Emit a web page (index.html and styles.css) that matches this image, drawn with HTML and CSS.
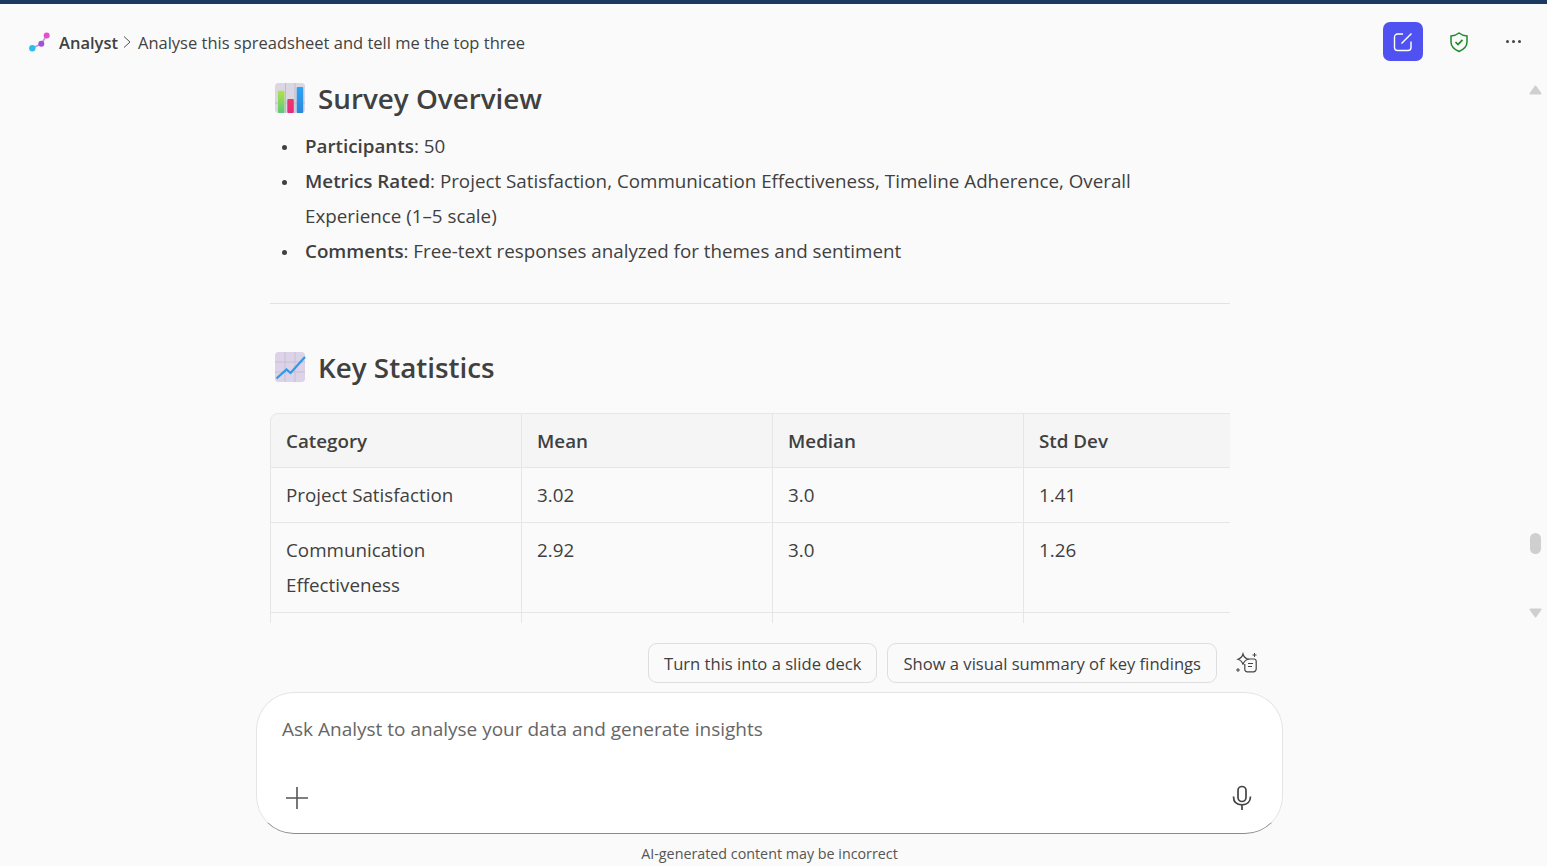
FILE: index.html
```html
<!DOCTYPE html>
<html lang="en">
<head>
    <meta charset="UTF-8">
    <title>Analyst</title>
    <link rel="stylesheet" href="styles.css">
</head>
<body>
    <div class="topline"></div>

    <header class="header">
        <svg class="logo" width="24" height="24" viewBox="0 0 24 24">
            <path d="M4.3 18.2 L13.3 13.8 L18.7 5.5" fill="none" stroke="#b3a6cc" stroke-width="1.6"/>
            <circle cx="4.3" cy="18.2" r="3.2" fill="#2fbdf0"/>
            <circle cx="13.3" cy="13.8" r="3" fill="#a34fdc"/>
            <circle cx="18.7" cy="5.5" r="3" fill="#e44fd0"/>
        </svg>
        <span class="app-name">Analyst</span>
        <svg class="crumb" width="10" height="14" viewBox="0 0 10 14"><path d="M2 1.5 L8 7 L2 12.5" fill="none" stroke="#555" stroke-width="1"/></svg>
        <span class="chat-title">Analyse this spreadsheet and tell me the top three</span>
        <div class="header-actions">
            <button class="new-chat">
                <svg width="22" height="22" viewBox="0 0 22 22" fill="none" stroke="#fff" stroke-width="1.4">
                    <path d="M11 3 H5.5 A3 3 0 0 0 2.5 6 V16.5 A3 3 0 0 0 5.5 19.5 H16 A3 3 0 0 0 19 16.5 V10.5"/>
                    <path d="M9.5 12.5 L19.5 2.5"/>
                </svg>
            </button>
            <svg class="shield" width="22" height="22" viewBox="0 0 22 22" fill="none" stroke="#1e8a2a" stroke-width="1.5">
                <path d="M11 2 C13.5 4 16 4.8 19 5 V11 C19 15.5 15.5 18.5 11 20.5 C6.5 18.5 3 15.5 3 11 V5 C6 4.8 8.5 4 11 2 Z"/>
                <path d="M7.5 11 L10 13.5 L14.5 8.8" stroke-width="1.7"/>
            </svg>
            <div class="more"><span></span><span></span><span></span></div>
        </div>
    </header>

    <main class="chat">
        <div class="content">
            <h2 class="section-title first">
                <svg width="32" height="32" viewBox="0 0 32 32">
                    <defs>
                        <linearGradient id="barGreen" x1="0" y1="0" x2="0" y2="1">
                            <stop offset="0" stop-color="#b2e24a"/>
                            <stop offset="1" stop-color="#5cc878"/>
                        </linearGradient>
                        <linearGradient id="barPink" x1="0" y1="0" x2="0" y2="1">
                            <stop offset="0" stop-color="#e83a6c"/>
                            <stop offset="1" stop-color="#e8287e"/>
                        </linearGradient>
                        <linearGradient id="barBlue" x1="0" y1="0" x2="0" y2="1">
                            <stop offset="0" stop-color="#2ea4f2"/>
                            <stop offset="1" stop-color="#2c86dc"/>
                        </linearGradient>
                    </defs>
                    <rect x="1" y="1" width="30" height="30" rx="3.5" fill="#dbd7e2"/>
                    <path d="M1 21 H31 M11.5 1 V31 M21 1 V31" stroke="#c0bbc9" stroke-width="1"/>
                    <rect x="4" y="8.7" width="6.5" height="22.3" rx="1" fill="url(#barGreen)"/>
                    <rect x="13.3" y="17" width="6.5" height="14" rx="1" fill="url(#barPink)"/>
                    <rect x="22.7" y="5" width="6.5" height="26" rx="1" fill="url(#barBlue)"/>
                </svg>
                Survey Overview
            </h2>
            <ul class="list">
                <li><b>Participants</b>: 50</li>
                <li><b>Metrics Rated</b>: Project Satisfaction, Communication Effectiveness, Timeline Adherence, Overall Experience (1–5 scale)</li>
                <li><b>Comments</b>: Free-text responses analyzed for themes and sentiment</li>
            </ul>
            <hr class="divider">
            <h2 class="section-title">
                <svg width="32" height="32" viewBox="0 0 32 32">
                    <rect x="1" y="1" width="30" height="30" rx="3.5" fill="#ddd3e8"/>
                    <path d="M1 11 H31 M1 21 H31 M11 1 V31 M21 1 V31" stroke="#c9bfd6" stroke-width="1"/>
                    <path d="M2.5 27.5 L12.5 18.5 L16.5 22 L31 6" fill="none" stroke="#2f9be6" stroke-width="2.3"/>
                </svg>
                Key Statistics
            </h2>
            <div class="table-wrap">
                <table class="stats">
                    <thead>
                        <tr><th>Category</th><th>Mean</th><th>Median</th><th>Std Dev</th></tr>
                    </thead>
                    <tbody>
                        <tr><td>Project Satisfaction</td><td>3.02</td><td>3.0</td><td>1.41</td></tr>
                        <tr><td>Communication Effectiveness</td><td>2.92</td><td>3.0</td><td>1.26</td></tr>
                        <tr><td>Timeline Adherence</td><td>3.10</td><td>3.0</td><td>1.33</td></tr>
                    </tbody>
                </table>
            </div>
        </div>
        <div class="scrollbar">
            <svg class="arrow-up" width="13" height="10" viewBox="0 0 13 10"><path d="M6.5 1.5 L11.5 8.5 H1.5 Z" fill="#cfcfcf" stroke="#cfcfcf" stroke-width="2" stroke-linejoin="round"/></svg>
            <span class="thumb"></span>
            <svg class="arrow-down" width="13" height="10" viewBox="0 0 13 10"><path d="M1.5 1.5 H11.5 L6.5 8.5 Z" fill="#cfcfcf" stroke="#cfcfcf" stroke-width="2" stroke-linejoin="round"/></svg>
        </div>
    </main>

    <div class="suggestions">
        <button class="chip">Turn this into a slide deck</button>
        <button class="chip">Show a visual summary of key findings</button>
        <svg class="prompt-icon" width="24" height="24" viewBox="0 0 24 24" fill="none" stroke="#444" stroke-width="1.2">
            <path d="M8 3 C8.8 6 10 7.3 13 8.2 C10 9.2 8.8 10.4 8 13.5 C7.2 10.4 6 9.2 3 8.2 C6 7.3 7.2 6 8 3 Z"/>
            <path d="M13 8 H19 A2.2 2.2 0 0 1 21.2 10.2 V18 A2.8 2.8 0 0 1 18.4 20.8 H12 A3 3 0 0 1 9.8 19 V13"/>
            <path d="M13 12.5 H18 M13 15.5 H17"/>
            <path d="M19.5 2 V6 M17.5 4 H21.5 M3 17 V21 M1 19 H5" stroke-width="1"/>
        </svg>
    </div>

    <div class="composer">
        <div class="placeholder">Ask Analyst to analyse your data and generate insights</div>
        <div class="composer-tools">
            <svg width="26" height="26" viewBox="0 0 26 26" stroke="#555" stroke-width="1.6"><path d="M13 2 V24 M2 13 H24"/></svg>
            <svg width="24" height="26" viewBox="0 0 24 26" fill="none" stroke="#444" stroke-width="1.7">
                <rect x="8" y="1.5" width="8" height="15" rx="4"/>
                <path d="M3.5 11.5 C3.5 17 7 19.8 12 19.8 C17 19.8 20.5 17 20.5 11.5 M12 20 V25"/>
            </svg>
        </div>
    </div>
    <p class="disclaimer">AI-generated content may be incorrect</p>
</body>
</html>
```

FILE: styles.css
```css
* {
    box-sizing: border-box;
}

html, body {
    height: 100%;
}

body {
    margin: 0;
    height: 866px;
    overflow: hidden;
    background-color: #fafafa;
    color: #404040;
    font-family: "Open Sans", "Noto Sans", sans-serif;
    font-size: 18.8px;
    display: flex;
    flex-direction: column;
}

.topline {
    height: 4px;
    background-color: #1b3a60;
    flex: none;
}

/* Header */
.header {
    height: 78px;
    flex: none;
    display: flex;
    align-items: center;
    padding: 0 15px 3px 28px;
    font-size: 16.5px;
}

.logo {
    margin-right: 7px;
}

.app-name {
    padding-top: 2px;
    font-weight: 600;
}

.crumb {
    margin: 0 6px 0 4px;
}

.chat-title {
    padding-top: 2px;
    color: #424242;
}

.header-actions {
    margin-left: auto;
    display: flex;
    align-items: center;
}

.new-chat {
    width: 40px;
    height: 39px;
    padding: 0;
    border: none;
    border-radius: 7px;
    background-color: #4f52f0;
    display: flex;
    align-items: center;
    justify-content: center;
}

.shield {
    margin-left: 25px;
}

.more {
    margin-left: 36px;
    margin-right: 11px;
    display: flex;
    gap: 3px;
}

.more span {
    width: 3px;
    height: 3px;
    border-radius: 50%;
    background-color: #444;
}

/* Chat content */
.chat {
    height: 541px;
    flex: none;
    position: relative;
    overflow: hidden;
}

.content {
    width: 960px;
    margin-left: 270px;
}

.section-title {
    margin: 0;
    height: 34px;
    display: flex;
    align-items: center;
    gap: 12px;
    padding-left: 4px;
    font-size: 27.8px;
    font-weight: 600;
    color: #404040;
}

.section-title.first {
    margin-top: -1px;
}

.list {
    margin: 14px 0 0;
    padding: 0 0 0 35px;
    line-height: 35px;
    list-style: none;
}

.list li {
    position: relative;
}

.list li::before {
    content: "";
    position: absolute;
    left: -23px;
    top: 16px;
    width: 5px;
    height: 5px;
    border-radius: 50%;
    background-color: #404040;
}

.list b {
    font-weight: 600;
}

.divider {
    margin: 34px 0 46px;
    border: none;
    border-top: 1px solid #e2e2e2;
}

.table-wrap {
    margin-top: 29px;
    overflow: hidden;
}

.stats {
    width: 1005px;
    table-layout: fixed;
    border-collapse: separate;
    border-spacing: 0;
    line-height: 35px;
}

.stats th, .stats td {
    width: 251px;
    padding: 10px 15px 9px;
    text-align: left;
    vertical-align: top;
    font-weight: 400;
    border-right: 1px solid #e6e6e6;
    border-bottom: 1px solid #e6e6e6;
}

.stats th {
    height: 54px;
    padding: 10px 15px 8px;
    font-weight: 600;
    background-color: #f5f5f5;
    border-top: 1px solid #e6e6e6;
}

.stats th:first-child, .stats td:first-child {
    width: 252px;
    border-left: 1px solid #e6e6e6;
}

.stats th:first-child {
    border-top-left-radius: 8px;
}

/* Fake scrollbar */
.arrow-up, .arrow-down, .thumb {
    position: absolute;
}

.arrow-up {
    left: 1529px;
    top: 3px;
}

.thumb {
    left: 1530px;
    top: 451px;
    width: 11px;
    height: 21px;
    border-radius: 6px;
    background-color: #cfcfcf;
}

.arrow-down {
    left: 1529px;
    top: 526px;
}

/* Suggestions */
.suggestions {
    height: 40px;
    margin-top: 20px;
    flex: none;
    display: flex;
    align-items: center;
    gap: 10px;
    padding-left: 648px;
}

.chip {
    height: 40px;
    padding: 1px 15px 0;
    font-family: inherit;
    font-size: 16.6px;
    color: #404040;
    background-color: #fafafa;
    border: 1px solid #dedede;
    border-radius: 9px;
}

.prompt-icon {
    margin-left: 8px;
}

/* Composer */
.composer {
    width: 1027px;
    height: 142px;
    margin: 9px 0 0 256px;
    flex: none;
    padding: 22px 25px 0;
    background-color: #fff;
    border: 1px solid #e4e4e4;
    border-bottom-color: #8c8c8c;
    border-radius: 38px;
}

.placeholder {
    color: #666;
    font-size: 19px;
    line-height: 28px;
}

.composer-tools {
    margin-top: 42px;
    display: flex;
    justify-content: space-between;
    padding: 0 3px 0 2px;
}

.disclaimer {
    margin: 11px 0 0;
    text-align: center;
    font-size: 14.3px;
    line-height: 18px;
    color: #555;
    padding-right: 8px;
}
```
